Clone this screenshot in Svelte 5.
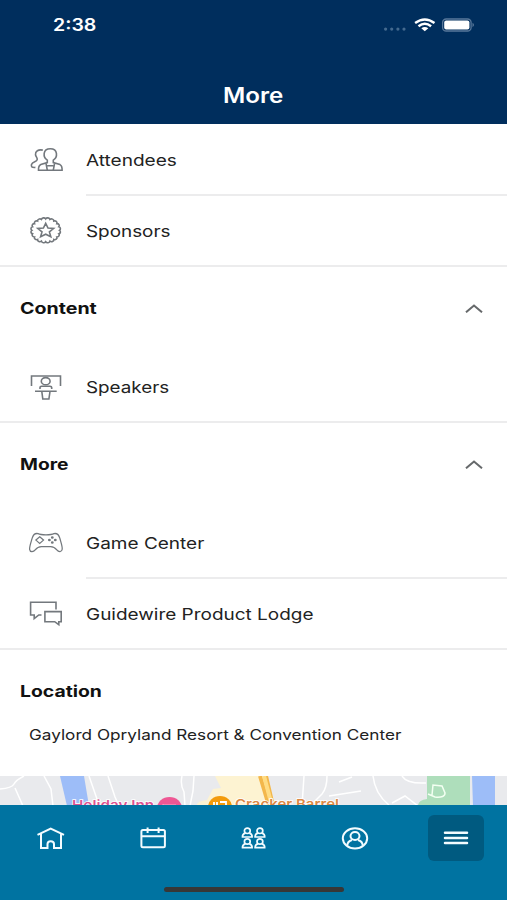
<script>
    export let time = '2:38';
    export let title = 'More';
    export let venue = 'Gaylord Opryland Resort & Convention Center';

    // Each group is closed by a full width divider
    const groups = [
        {
            heading: '',
            items: [
                { icon: 'attendees', label: 'Attendees', stretch: 1.19 },
                { icon: 'sponsors', label: 'Sponsors', stretch: 1.18 },
            ],
        },
        {
            heading: 'Content',
            stretch: 1.225,
            items: [{ icon: 'speakers', label: 'Speakers', stretch: 1.177 }],
        },
        {
            heading: 'More',
            stretch: 1.2,
            items: [
                { icon: 'game', label: 'Game Center', stretch: 1.187 },
                { icon: 'chat', label: 'Guidewire Product Lodge', stretch: 1.185 },
            ],
        },
    ];

    const tabs = ['home', 'calendar', 'people', 'profile', 'menu'];
    let active = 'menu';
    let open = { Content: true, More: true };

    // Scalloped outline of the sponsor badge
    const scallops = (cx, cy, rx, ry, count) => {
        let d = '';
        for (let i = 0; i <= count; i++) {
            const a = (i / count) * Math.PI * 2;
            const x = (cx + rx * Math.cos(a)).toFixed(2);
            const y = (cy + ry * Math.sin(a)).toFixed(2);
            d += i === 0 ? `M${x} ${y}` : `A2.3 2 0 0 1 ${x} ${y}`;
        }
        return d + 'Z';
    };

    const badge = scallops(17.7, 14.3, 13.8, 11.4, 20);
</script>

<div class="phone">
    <header>
        <div class="status">
            <span class="wide time">{time}</span>
            <svg class="signal" width="94" height="16" viewBox="0 0 94 16">
                <g fill="#446a8f">
                    <circle cx="2.6" cy="12.1" r="1.6" />
                    <circle cx="8.7" cy="12.1" r="1.6" />
                    <circle cx="14.9" cy="12.1" r="1.6" />
                    <circle cx="21" cy="12.1" r="1.6" />
                </g>
                <g fill="none" stroke="#fff" stroke-width="2.4">
                    <path d="M32.1 6Q41.8 -1.200 51.500 6" />
                    <path d="M35.500 9.300Q41.800 4.300 48.100 9.300" />
                </g>
                <path d="M38.300 11.300Q41.800 8.800 45.300 11.300L41.800 14.300Z" fill="#fff" />
                <rect x="59.6" y="2" width="28.5" height="12" rx="3.6" fill="none" stroke="#58789a" stroke-width="1.3" />
                <rect x="61.2" y="3.4" width="25.2" height="9.2" rx="2" fill="#fff" />
                <path d="M89.500 5.800Q92.500 8 89.500 10.200Z" fill="#58789a" />
            </svg>
        </div>
        <h1><span class="wide">{title}</span></h1>
    </header>

    <main>
        {#each groups as group}
            <section>
                {#if group.heading}
                    <button class="heading" on:click={() => (open[group.heading] = !open[group.heading])}>
                        <span class="wide" style="--stretch: {group.stretch}">{group.heading}</span>
                        <svg class:closed={!open[group.heading]} width="18" height="10" viewBox="0 0 18 10">
                            <path d="M1 9.300L9 2.500L17 9.300" fill="none" stroke="#66696b" stroke-width="2" />
                        </svg>
                    </button>
                {/if}
                {#if !group.heading || open[group.heading]}
                    {#each group.items as item}
                        <div class="row">
                            <svg class="icon" width="36" height="30" viewBox="0 0 36 30">
                                {#if item.icon === 'attendees'}
                                    <path d="M14.8 5.100C10.300 4.100 7.200 6.200 7.500 9.600C7.600 11.600 9.600 12.500 9.200 14.600C8.700 17.300 4.500 16 3.500 19.500C3 22 3.500 22.600 7.400 22.400" />
                                    <path d="M19.3 15.100C14.800 12.500 14.500 3.700 22.300 3.700S29.800 12.500 25.300 15.100V17.600L32 19.600C34 20.600 34.200 23 34.100 25.300H10.500C10.400 23 10.600 20.600 12.800 19.600L19.3 17.600Z" />
                                    <path d="M18 18.400L19.3 25.100M26.6 18.400L25.3 25.100M19.300 20.800H25.300" />
                                {:else if item.icon === 'sponsors'}
                                    <path d={badge} />
                                    <path d="M17.7 7.400L20 12.100L25.600 12.500L21.400 15.900L22.800 20.700L17.7 18.200L12.600 20.700L14 15.900L9.800 12.500L15.400 12.100Z" />
                                {:else if item.icon === 'speakers'}
                                    <path d="M3.5 14V4H32.500V14" />
                                    <ellipse cx="17.7" cy="9.2" rx="4.4" ry="3.6" />
                                    <path d="M12 17V15.500Q12 14.300 13.500 14.300H22Q23.700 14.300 23.700 15.500V17M7 19.300H28.700M13.800 19.500L14.800 27H20.900L22 19.500" />
                                {:else if item.icon === 'game'}
                                    <g stroke-width="1.25">
                                        <path d="M10 5.6Q12.3 6.8 18 6.8T26 5.6C29.8 4.9 31 7.2 31.8 10.2C33 14.5 34.5 18.5 34.2 21.3C33.8 24.4 30.6 24.2 28.8 21.9C27 19.5 25.4 18.6 22.6 18.6H13.4C10.6 18.6 9 19.5 7.2 21.9C5.4 24.2 2 24.4 1.6 21.3C1.4 18.5 3 14.5 4.2 10.2C5 7.2 6.2 4.9 10 5.6Z" />
                                        <path d="M11.7 8.8L15.5 12.1L11.7 15.4L7.9 12.1Z" />
                                        <ellipse cx="24.3" cy="9.5" rx="0.8" ry="0.6" />
                                        <ellipse cx="24.3" cy="14.5" rx="0.8" ry="0.6" />
                                        <ellipse cx="21.4" cy="12" rx="0.8" ry="0.6" />
                                        <ellipse cx="27.3" cy="12" rx="0.8" ry="0.6" />
                                    </g>
                                {:else}
                                    <path d="M28 10.500V3.200H2.600V16H6.200V19.700L10.800 16H13.500" />
                                    <path d="M16.900 12.600H33.200V22.700H30.800V25.700L26.700 22.700H16.900Z" />
                                {/if}
                            </svg>
                            <div class="label">
                                <span class="wide" style="--stretch: {item.stretch}">{item.label}</span>
                            </div>
                        </div>
                    {/each}
                {/if}
            </section>
        {/each}

        <section class="location">
            <h2><span class="wide">Location</span></h2>
            <p><span class="wide">{venue}</span></p>
            <svg class="map" width="507" height="30" viewBox="0 0 507 30">
                <rect width="507" height="30" fill="#e9eaed" />
                <path d="M197 30Q196 25 207 24L213 13L221 12L215 0H262L276 30Z" fill="#fdf3d2" />
                <path d="M60 0H84L89 30H67Z" fill="#9dbdf8" />
                <path d="M427 0H470V30H418Q418 24 427 23Z" fill="#aedebb" />
                <path d="M472 0H495V30H473Z" fill="#9dbdf8" />
                <g fill="none" stroke="#fff" stroke-width="1.5">
                    <path d="M0 13Q12 12 14 8Q16 4 24 0M15 12L23 30M44 0L51 13L53 30M89 0L98 26M108 0L115 21L119 30M182 0Q180 9 184 16L185 30M194 0L193 15L190 30" />
                    <path d="M304 0L302 30M327 0Q327 12 322 18L313 27M329 20L361 15M339 6L352 1M373 0Q375 18 389 29M392 27L405 20L418 30M402 0Q407 8 426 7" />
                </g>
                <path d="M260 0L269 30M266 0L273 30" stroke="#f3b74b" stroke-width="4" />
                <path d="M264 0L272 30" stroke="#ffdc83" stroke-width="4" />
                <path d="M428 18L435 21Q445 22 445 17L442 10L433 9L432 19" fill="none" stroke="#f3fff2" stroke-width="1.5" />
                <ellipse cx="169.5" cy="32" rx="12.5" ry="11" fill="#ee5794" />
                <path d="M163 31V28M163 29H176" stroke="#f9a8c7" stroke-width="1" fill="none" />
                <ellipse cx="220" cy="31" rx="12" ry="11" fill="#f39b0b" />
                <path d="M214 26V31M217 26V31M220 26H226V31" stroke="#fff" stroke-width="1.8" fill="none" />
                <g class="places">
                    <text x="72" y="33.5" fill="#dc5291" textLength="82" lengthAdjust="spacingAndGlyphs">Holiday Inn</text>
                    <text x="235" y="33" fill="#dc8743" textLength="104" lengthAdjust="spacingAndGlyphs">Cracker Barrel</text>
                </g>
            </svg>
        </section>
    </main>

    <footer>
        <nav>
            {#each tabs as tab}
                <button class="tab" class:active={active === tab} aria-label={tab} on:click={() => (active = tab)}>
                    <svg width="32" height="28" viewBox="0 0 32 28">
                        {#if tab === 'home'}
                            <path d="M2.5 10.800L15.700 4.600L29 10.800M6 9.800V24H12.500V20Q12.500 17.200 15.700 17.200T19 20V24H26V9.800" />
                        {:else if tab === 'calendar'}
                            <rect x="5.4" y="6" width="23.5" height="17.3" rx="1.5" />
                            <path d="M5.400 12.300H29M11.600 3.500V9M22.600 3.500V9" />
                        {:else if tab === 'people'}
                            <g stroke-width="1.7">
                                {#each [10.3, 22.9] as x}
                                    {#each [6.8, 17.5] as y}
                                        <ellipse cx={x} cy={y} rx="2.9" ry="2.7" />
                                        <path d="M{x - 2} {y + 2.3}Q{x - 5} {y + 3} {x - 4.8} {y + 6.2}H{x + 4.8}Q{x + 5} {y + 3} {x + 2} {y + 2.3}" />
                                    {/each}
                                {/each}
                            </g>
                        {:else if tab === 'profile'}
                            <ellipse cx="16" cy="14.3" rx="12.2" ry="10.1" />
                            <ellipse cx="16" cy="12" rx="4.5" ry="4" />
                            <path d="M8.200 21.600Q8.500 17.300 13 16M23.800 21.600Q23.500 17.300 19 16" />
                        {:else}
                            <path d="M5 8.700H27M5 13.900H27M5 19.100H27" stroke-width="2.5" stroke-linecap="round" />
                        {/if}
                    </svg>
                </button>
            {/each}
        </nav>
        <div class="home-bar"></div>
    </footer>
</div>

<style>
    :global(body) {
        margin: 0;
    }

    .phone {
        display: flex;
        flex-direction: column;
        width: 507px;
        height: 900px;
        overflow: hidden;
        background: #fff;
        color: #222;
        font-family: Inter, 'Liberation Sans', sans-serif;
    }

    button {
        padding: 0;
        border: 0;
        background: none;
        color: inherit;
        font: inherit;
        cursor: pointer;
    }

    /* Glyphs are drawn wider than the face supplies */
    .wide {
        display: inline-block;
        white-space: nowrap;
        transform: scaleX(var(--stretch, 1.15));
        transform-origin: left center;
    }

    header {
        flex: none;
        height: 124px;
        background: #002e5d;
        color: #fff;
    }

    .status {
        display: flex;
        align-items: center;
        justify-content: space-between;
        height: 49px;
        padding: 0 30px 0 53px;
    }

    .time {
        font-size: 17px;
        font-weight: 600;
    }

    h1 {
        margin: 0;
        padding-top: 34px;
        font-size: 21px;
        font-weight: 600;
        line-height: 26px;
        text-align: center;
    }

    h1 .wide {
        transform-origin: center;
    }

    main {
        flex: 1;
        min-height: 0;
        padding-top: 1px;
        overflow: hidden;
    }

    .heading {
        display: flex;
        align-items: center;
        justify-content: space-between;
        box-sizing: border-box;
        width: 100%;
        height: 85px;
        padding: 0 24px 3px 20px;
        color: #111;
        font-size: 16px;
        font-weight: 700;
    }

    .closed {
        transform: rotate(180deg);
    }

    .row {
        display: flex;
        align-items: center;
        height: 71px;
        padding-left: 28px;
    }

    .icon {
        flex: none;
        margin: 0 22px 2px 0;
        fill: none;
        stroke: #73787d;
        stroke-width: 1.6;
    }

    .label {
        flex: 1;
        height: 69px;
        border-bottom: 2px solid #ececed;
        font-size: 16px;
        line-height: 70px;
    }

    section .row:last-child {
        border-bottom: 2px solid #ececed;
        height: 69px;
    }

    section .row:last-child .icon {
        margin-bottom: 0;
    }

    section .row:last-child .label {
        border-bottom: 0;
    }

    h2 {
        --stretch: 1.21;
        margin: 0;
        padding: 31px 0 0 20px;
        color: #111;
        font-size: 16px;
        font-weight: 700;
        line-height: 20px;
    }

    p {
        --stretch: 1.184;
        margin: 0;
        padding: 24px 0 0 29px;
        font-size: 14.5px;
        line-height: 20px;
    }

    .map {
        display: block;
        margin-top: 31px;
    }

    .places {
        font-size: 13px;
        font-weight: 600;
        stroke: #fff;
        stroke-width: 1.5;
        paint-order: stroke;
    }

    footer {
        display: flex;
        flex: none;
        flex-direction: column;
        align-items: center;
        height: 95px;
        background: #0073a1;
    }

    nav {
        display: grid;
        grid-template-columns: repeat(5, 1fr);
        justify-items: center;
        width: 100%;
        padding-top: 10px;
    }

    .tab {
        display: flex;
        align-items: center;
        justify-content: center;
        width: 56px;
        height: 46px;
        border-radius: 6px;
    }

    .tab svg {
        fill: none;
        stroke: #f3fcff;
        stroke-width: 2;
    }

    .active {
        background: #005a80;
    }

    .home-bar {
        width: 180px;
        height: 5px;
        margin-top: 26px;
        border-radius: 3px;
        background: #373737;
    }
</style>
